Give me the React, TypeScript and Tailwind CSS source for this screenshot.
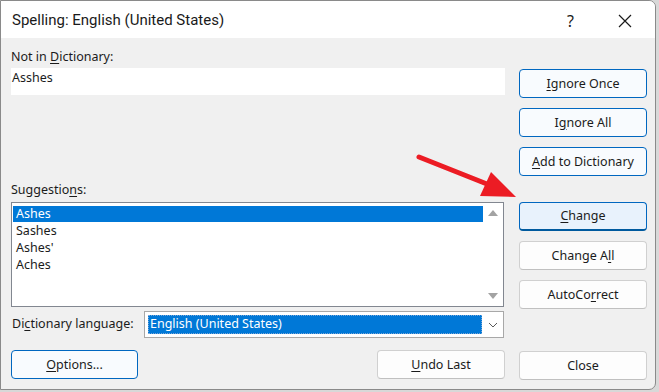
import React from "react";

const font = { fontFamily: '"Segoe UI", "Noto Sans", sans-serif' };
const titleFont = { fontFamily: '"Segoe UI", Roboto, "Noto Sans", sans-serif' };

// underline the access key letter of a label
const Key = ({ children }: { children: React.ReactNode }) => (
  <span className="underline underline-offset-[2px] decoration-[1px]">{children}</span>
);

type BtnProps = {
  children: React.ReactNode;
  variant?: "plain" | "blue" | "default";
  className?: string;
};

const DlgButton = ({ children, variant = "plain", className = "" }: BtnProps) => {
  const look =
    variant === "default"
      ? "border-[#0067c0] bg-[#e8f2fc] border-b-2 border-b-[#005a9e]"
      : variant === "blue"
      ? "border-[#0067c0] bg-[#f8fbfe]"
      : "border-[#d0d0d0] bg-[#fdfdfd] border-b-[#c0c0c0]";
  return (
    <div
      className={`flex h-[29px] items-center justify-center rounded-[4px] border pt-[1px] text-[12.5px] text-[#1b1b1b] ${look} ${className}`}
    >
      {children}
    </div>
  );
};

const suggestions = ["Ashes", "Sashes", "Ashes'", "Aches"];

export default function App() {
  return (
    <div className="h-[392px] w-[659px] bg-[#d8d8d8]" style={font}>
      <div className="flex h-[390px] w-[656px] flex-col overflow-hidden rounded-tr-[7px] rounded-br-[7px] border border-[#8a8a8a] bg-[#f0f0f0]">
        {/* title bar */}
        <div className="flex h-[37px] shrink-0 items-center bg-white">
          <div className="pl-[11px] pt-[2px] text-[15px] text-[#1a1a1a]" style={titleFont}>
            Spelling: English (United States)
          </div>
          <div className="ml-auto pt-[2px] text-[16px] text-[#1a1a1a]">?</div>
          <div className="ml-[44px] mr-[23px] pt-[2px]">
            <svg width="14" height="14" viewBox="0 0 14 14">
              <path d="M1 1 L13 13 M13 1 L1 13" stroke="#1a1a1a" strokeWidth="1.2" />
            </svg>
          </div>
        </div>

        {/* body */}
        <div className="relative flex flex-1 pl-[10px]">
          {/* left column */}
          <div className="flex w-[494px] flex-col text-[12.5px] text-[#1b1b1b]">
            <div className="mt-[11px] h-[16px] leading-[16px]">
              Not in <Key>D</Key>ictionary:
            </div>
            <div className="mt-[3px] h-[27px] bg-white pl-[1px] pt-[2px] leading-[16px]">
              Asshes
            </div>
            <div className="mt-[87px] h-[16px] leading-[16px]">
              Suggestio<Key>n</Key>s:
            </div>
            <div className="mt-[4px] flex h-[105px] w-[493px] border border-[#828790] bg-white">
              <div className="flex-1 pl-[1px] pt-[3px]">
                {suggestions.map((s, i) => (
                  <div
                    key={s}
                    className={`mb-[1px] h-[16px] pl-[3px] leading-[16px] ${
                      i === 0 ? "bg-[#0078d7] text-white" : ""
                    }`}
                  >
                    {s}
                  </div>
                ))}
              </div>
              <div className="flex w-[20px] flex-col items-center justify-between py-[6px]">
                <svg width="12" height="8" viewBox="0 0 12 8">
                  <path d="M6 1 L11 7 L1 7 Z" fill="#a3a3a3" />
                </svg>
                <svg width="12" height="8" viewBox="0 0 12 8">
                  <path d="M1 1 L11 1 L6 7 Z" fill="#a3a3a3" />
                </svg>
              </div>
            </div>
            <div className="mt-[4px] flex h-[27px] items-center">
              <div className="w-[133px] pl-[1px]">
                Di<Key>c</Key>tionary language:
              </div>
              <div className="flex h-[27px] w-[360px] border border-[#a8a8a8] bg-white">
                <div className="flex flex-1 p-[3px] pr-0">
                  <div className="flex flex-1 items-center border border-dotted border-[#7aa7d8] bg-[#0078d7] pl-[1px] text-white">
                    English (United States)
                  </div>
                </div>
                <div className="flex w-[21px] items-center justify-center">
                  <svg width="10" height="6" viewBox="0 0 10 6">
                    <path d="M1 1 L5 5 L9 1" stroke="#5a5a5a" strokeWidth="1" fill="none" />
                  </svg>
                </div>
              </div>
            </div>
            <div className="mt-[12px] flex justify-between">
              <DlgButton variant="blue" className="w-[127px]">
                <Key>O</Key>ptions...
              </DlgButton>
              <DlgButton className="w-[128px]">
                <Key>U</Key>ndo Last
              </DlgButton>
            </div>
          </div>

          {/* right column */}
          <div className="ml-[14px] flex w-[128px] flex-col">
            <DlgButton variant="blue" className="mt-[31px]">
              <Key>I</Key>gnore Once
            </DlgButton>
            <DlgButton variant="blue" className="mt-[10px]">
              I<Key>g</Key>nore All
            </DlgButton>
            <DlgButton variant="blue" className="mt-[10px]">
              <Key>A</Key>dd to Dictionary
            </DlgButton>
            <DlgButton variant="default" className="mt-[26px]">
              <Key>C</Key>hange
            </DlgButton>
            <DlgButton className="mt-[10px]">
              Change A<Key>l</Key>l
            </DlgButton>
            <DlgButton className="mt-[10px]">
              AutoCo<Key>r</Key>rect
            </DlgButton>
            <DlgButton className="mt-[42px]">Close</DlgButton>
          </div>

          {/* red annotation arrow, drawn in page coordinates */}
          <svg
            className="pointer-events-none absolute left-0 top-0"
            width="656"
            height="350"
            viewBox="1 38 656 350"
          >
            <path d="M419 157 L492 186" stroke="#ec1c24" strokeWidth="5" strokeLinecap="round" />
            <path d="M491 172 L516 197 L480 196 Z" fill="#ec1c24" />
          </svg>
        </div>
      </div>
    </div>
  );
}
